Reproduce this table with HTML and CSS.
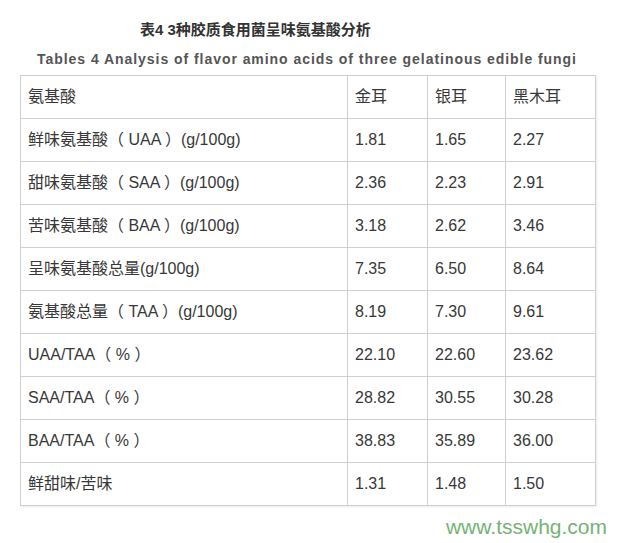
FILE: index.html
```html
<!DOCTYPE html>
<html lang="zh-CN">
<head>
<meta charset="utf-8">
<title>表4</title>
<link rel="stylesheet" href="styles.css">
</head>
<body>
<div class="page">
  <div class="title">表4 3种胶质食用菌呈味氨基酸分析</div>
  <div class="subtitle">Tables 4 Analysis of flavor amino acids of three gelatinous edible fungi</div>
  <table class="data">
    <colgroup>
      <col class="c1"><col class="c2"><col class="c3"><col class="c4">
    </colgroup>
    <tr><td>氨基酸</td><td>金耳</td><td>银耳</td><td>黑木耳</td></tr>
    <tr><td>鲜味氨基酸（ UAA ）(g/100g)</td><td>1.81</td><td>1.65</td><td>2.27</td></tr>
    <tr><td>甜味氨基酸（ SAA ）(g/100g)</td><td>2.36</td><td>2.23</td><td>2.91</td></tr>
    <tr><td>苦味氨基酸（ BAA ）(g/100g)</td><td>3.18</td><td>2.62</td><td>3.46</td></tr>
    <tr><td>呈味氨基酸总量(g/100g)</td><td>7.35</td><td>6.50</td><td>8.64</td></tr>
    <tr><td>氨基酸总量（ TAA ）(g/100g)</td><td>8.19</td><td>7.30</td><td>9.61</td></tr>
    <tr><td>UAA/TAA（ % ）</td><td>22.10</td><td>22.60</td><td>23.62</td></tr>
    <tr><td>SAA/TAA（ % ）</td><td>28.82</td><td>30.55</td><td>30.28</td></tr>
    <tr><td>BAA/TAA（ % ）</td><td>38.83</td><td>35.89</td><td>36.00</td></tr>
    <tr><td>鲜甜味/苦味</td><td>1.31</td><td>1.48</td><td>1.50</td></tr>
  </table>
  <div class="mark">www.tsswhg.com</div>
</div>
</body>
</html>
```
FILE: styles.css
```css
html, body {
  margin: 0;
  padding: 0;
  background: #ffffff;
}
.page {
  width: 618px;
  height: 543px;
  overflow: hidden;
  font-family: "Liberation Sans", Arial, "Noto Sans CJK SC", sans-serif;
  color: #333333;
}
.title {
  padding: 20px 0 0 140px;
  font-size: 15px;
  line-height: 20px;
  font-weight: bold;
  color: #333333;
  font-family: "Liberation Sans", "Noto Sans CJK SC", sans-serif;
}
.subtitle {
  margin: 0 0 0 20px;
  width: 574px;
  text-align: center;
  padding-top: 9px;
  font-size: 14px;
  line-height: 20px;
  font-weight: bold;
  letter-spacing: 0.95px;
  color: #555555;
  height: 26px;
}
.data {
  margin-left: 20px;
  border-collapse: collapse;
  width: 575px;
  table-layout: fixed;
  font-size: 16px;
  color: #383838;
  box-shadow: 1px 1px 2px rgba(0,0,0,0.08);
}
.c1 { width: 327px; }
.c2 { width: 80px; }
.c3 { width: 78px; }
.c4 { width: 90px; }
.data td {
  border: 1px solid #cfcfcf;
  height: 43px;
  padding: 0 0 0 7px;
  line-height: 20px;
  vertical-align: middle;
  white-space: nowrap;
  box-sizing: border-box;
}
.mark {
  padding: 9px 11px 0 0;
  text-align: right;
  font-size: 21px;
  line-height: 24px;
  color: #75b375;
}
```
